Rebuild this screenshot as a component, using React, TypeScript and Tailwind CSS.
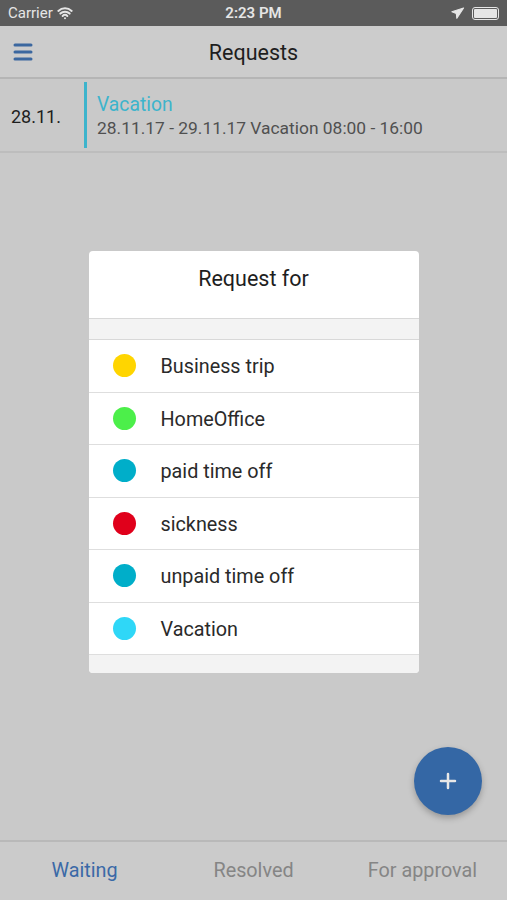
import { Menu, Plus, Wifi, Navigation } from 'lucide-react'

const items = [
  { label: 'Business trip', color: 'bg-[#ffd500]' },
  { label: 'HomeOffice', color: 'bg-[#4cef4a]' },
  { label: 'paid time off', color: 'bg-[#00aec9]' },
  { label: 'sickness', color: 'bg-[#e0001b]' },
  { label: 'unpaid time off', color: 'bg-[#00aec9]' },
  { label: 'Vacation', color: 'bg-[#2fd7f7]' },
]

export default function App() {
  return (
    <div className="w-[507px] h-[900px] bg-[#c9c9c9] flex flex-col relative overflow-hidden font-['Roboto',sans-serif]">
      {/* Status bar */}
      <div className="h-[26px] bg-[#5b5b5b] text-[#e6e6e6] flex items-center px-2 text-[15px] relative">
        <div className="flex items-center gap-1">
          <span>Carrier</span>
          <Wifi className="w-4 h-4" strokeWidth={3} />
        </div>
        <span className="absolute left-1/2 -translate-x-1/2 font-semibold">2:23 PM</span>
        <div className="ml-auto flex items-center gap-2">
          <Navigation className="w-3.5 h-3.5 fill-[#e6e6e6] rotate-[8deg]" />
          <div className="w-[27px] h-[13px] border border-[#e6e6e6] rounded-[3px] p-[1px]">
            <div className="w-full h-full bg-[#e6e6e6] rounded-[1px]" />
          </div>
        </div>
      </div>

      {/* Nav bar */}
      <div className="h-[53px] bg-[#cccccc] border-b-2 border-[#b5b5b5] flex items-center relative">
        <Menu className="w-[24px] h-[24px] text-[#3b679f] ml-[11px]" strokeWidth={3} />
        <span className="absolute left-1/2 -translate-x-1/2 pt-[3px] text-[21.5px] text-[#1e1e1e]">Requests</span>
      </div>

      {/* Request row */}
      <div className="h-[74px] border-b-2 border-[#bdbdbd] flex items-center">
        <span className="w-[84px] pl-[11px] pt-[2px] text-[18px] text-[#1e1e1e]">28.11.</span>
        <div className="w-[3px] h-[66px] bg-[#3db4cc]" />
        <div className="pl-[10px] flex flex-col pt-[4px]">
          <span className="text-[19.3px] leading-[22px] text-[#3db4cc]">Vacation</span>
          <span className="text-[17.4px] leading-[24px] text-[#505050]">28.11.17 - 29.11.17 Vacation 08:00 - 16:00</span>
        </div>
      </div>

      {/* Modal */}
      <div className="flex-1 flex justify-center pt-[98px]">
        <div className="w-[330px] h-[422px] bg-white rounded-[4px] overflow-hidden flex flex-col">
          <div className="h-[68px] border-b border-[#d8d8d8] flex justify-center pt-[12px] text-[21.5px] text-[#1e1e1e]">
            Request for
          </div>
          <div className="h-[21px] bg-[#f3f3f3] border-b border-[#d8d8d8]" />
          {items.map(item => (
            <div key={item.label} className="h-[52.5px] border-b border-[#dedede] flex items-center">
              <div className={`w-[23px] h-[23px] rounded-full ml-[24px] ${item.color}`} />
              <span className="ml-[25px] pt-[3px] text-[19.8px] text-[#2a2a2a]">{item.label}</span>
            </div>
          ))}
          <div className="flex-1 bg-[#f3f3f3]" />
        </div>
      </div>

      {/* FAB */}
      <div className="absolute left-[414px] top-[747px] w-[68px] h-[68px] rounded-full bg-[#3467a5] shadow-[0_3px_6px_rgba(0,0,0,0.25)] flex items-center justify-center">
        <Plus className="w-[24px] h-[24px] text-[#e8e8e8]" strokeWidth={2.5} />
      </div>

      {/* Tab bar */}
      <div className="h-[60px] border-t-2 border-[#b9b9b9] bg-[#cbcbcb] grid grid-cols-3 items-center text-[19.8px]">
        <span className="text-center text-[#3a69a7]">Waiting</span>
        <span className="text-center text-[#858585]">Resolved</span>
        <span className="text-center text-[#858585]">For approval</span>
      </div>
    </div>
  )
}
